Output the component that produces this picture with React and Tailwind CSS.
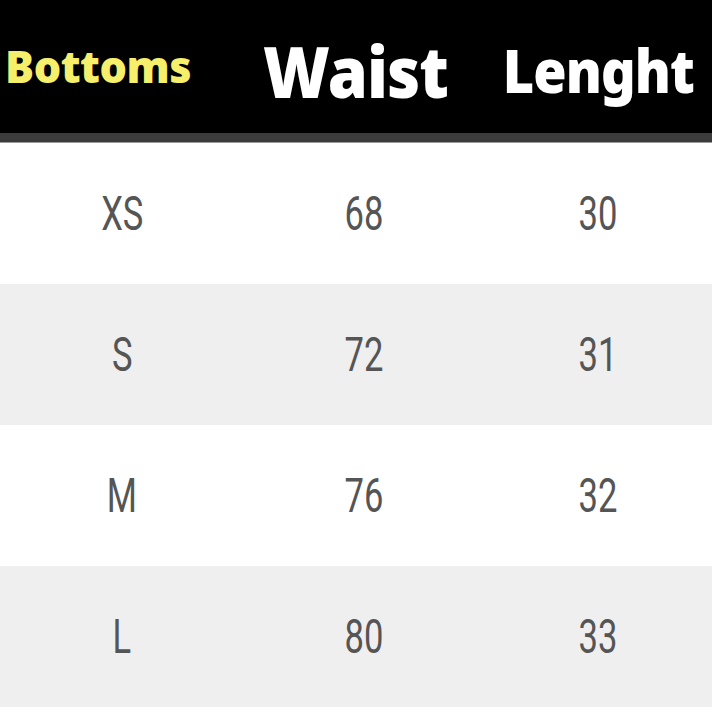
const rows = [
  { size: 'XS', waist: '68', length: '30', bg: 'bg-white' },
  { size: 'S', waist: '72', length: '31', bg: 'bg-[#efefef]' },
  { size: 'M', waist: '76', length: '32', bg: 'bg-white' },
  { size: 'L', waist: '80', length: '33', bg: 'bg-[#efefef]' },
];

const Cell = ({ children }) => (
  <div className="flex items-center justify-center">
    <span className="inline-block scale-x-[0.72] text-[48px] leading-none text-[#555555] font-['Roboto',sans-serif]">
      {children}
    </span>
  </div>
);

export default function App() {
  return (
    <div className="w-[712px] h-[712px] bg-white overflow-hidden flex flex-col">
      <div className="h-[133px] bg-black grid grid-cols-[244px_240px_228px] items-center font-['Noto_Sans',sans-serif] font-black leading-none">
        <div className="pl-[5px] pb-[2px]">
          <span className="inline-block origin-left scale-x-[0.96] text-[45px] text-[#f5ef6b] tracking-[-0.5px]">Bottoms</span>
        </div>
        <div className="flex justify-center pt-[8px] pr-[16px]">
          <span className="inline-block scale-x-[0.92] text-[70px] text-white tracking-[-1px]">Waist</span>
        </div>
        <div className="flex justify-center pt-[6px]">
          <span className="inline-block scale-x-[0.9] text-[60px] text-white tracking-[-1px]">Lenght</span>
        </div>
      </div>
      <div className="h-[10px] bg-[#3c3c3c] border-b border-[#9a9a9a]" />
      {rows.map((r) => (
        <div key={r.size} className={`h-[141px] grid grid-cols-[244px_240px_228px] ${r.bg}`}>
          <Cell>{r.size}</Cell>
          <Cell>{r.waist}</Cell>
          <Cell>{r.length}</Cell>
        </div>
      ))}
    </div>
  );
}
